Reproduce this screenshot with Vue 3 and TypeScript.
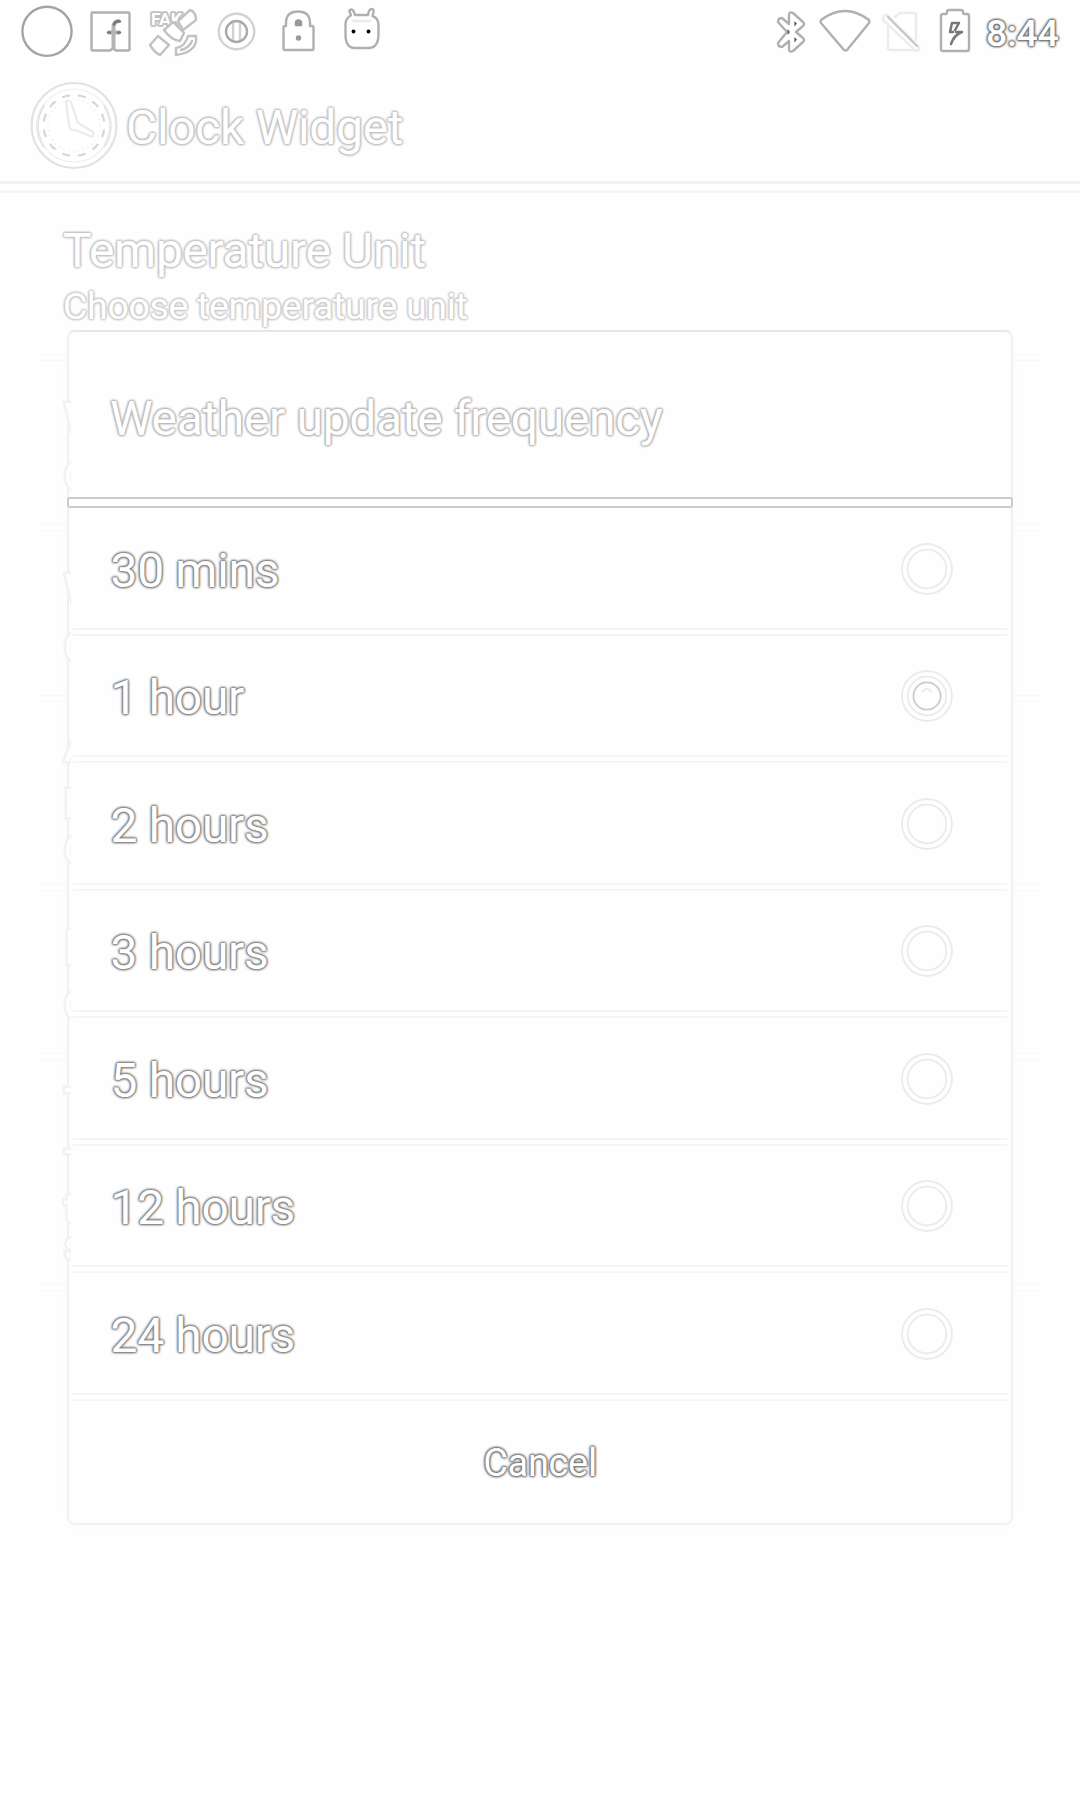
<script setup lang="ts">
const options: string[] = ['30 mins', '1 hour', '2 hours', '3 hours', '5 hours', '12 hours', '24 hours']
const selected = '1 hour'
const ticks: number[] = Array.from({ length: 12 }, (_, i) => i * 30 + 15)
// Section boundaries and leading glyphs of the settings list that peeks out behind the dialog
const sections: number[] = [170, 171, 189, 169, 231]
const peeks: { c: string; y: number; s: number }[] = [
  { c: 'W', y: 421, s: 48 }, { c: 'C', y: 474, s: 38 }, { c: 'W', y: 592, s: 48 }, { c: 'C', y: 645, s: 38 },
  { c: 'A', y: 745, s: 48 }, { c: 'E', y: 801, s: 38 }, { c: 'C', y: 848, s: 38 }, { c: 'E', y: 948, s: 48 },
  { c: 'C', y: 1003, s: 38 }, { c: 'T', y: 1106, s: 48 }, { c: 'T', y: 1162, s: 38 }, { c: 't', y: 1206, s: 38 },
  { c: 's', y: 1243, s: 38 },
]
</script>

<template>
  <main class="screen">
    <header class="status">
      <svg class="ic" width="69" height="66" viewBox="14 0 69 66"><circle cx="47" cy="31.300" r="24.600" /></svg>
      <svg class="ic mid" width="57" height="66" viewBox="83 0 57 66">
        <path d="M92 12.500h36q1.500 0 1.500 1.500v35q0 1.500-1.500 1.500h-12l-3-2-3 2H93q-1.500 0-1.500-1.500V14q0-1.500 1.500-1.500z" />
        <path class="eff" d="M113.500 49V27q0-6 6.500-6M108 32.500h12" />
        <path class="dark" d="M120 21.500q-5-1-6 3M108 32.500h2M118 32.500h2" />
      </svg>
      <svg class="ic soft" width="67" height="66" viewBox="140 0 67 66">
        <path d="M150 45l8-9 11 9-9 10q-5-2-10-10z" />
        <path d="M176 55v-7q9-1 12-12h8q2 16-20 19zM181 50q8-2 11-9" />
        <text x="151" y="25" class="fak" textLength="31" lengthAdjust="spacingAndGlyphs">FAK</text>
        <path d="M178 21l12-11q6 2 6 10l-13 10z" />
        <path d="M164 30l9-8 11 11-4 8q-9-1-16-11z" />
      </svg>
      <svg class="ic light" width="60" height="66" viewBox="207 0 60 66">
        <circle cx="236.500" cy="31.500" r="17.700" /><path d="M233 23v17M240 23v17" /><circle class="ring" cx="236.500" cy="31.500" r="10.500" />
      </svg>
      <svg class="ic mid" width="64" height="66" viewBox="267 0 64 66">
        <path d="M286 26v-3q0-11.500 12-11.500t12 11.500v3h2q1.500 0 1.500 1.500v21q0 1.500-1.500 1.500h-27q-1.500 0-1.500-1.500v-21q0-1.500 1.500-1.500z" />
        <path d="M295.500 25.500v-2.500q0-3 3-3t3 3v2.500z" class="fillg" /><circle class="fillg" cx="298.500" cy="38" r="2" />
      </svg>
      <svg class="ic mid" width="62" height="66" viewBox="332 0 62 66">
        <path d="M352 15.500l-1.500-4q0-2 2-2t3.500 5.500h13q1-6 3.500-6t2 3l-1 4q6 2 6 9v9q0 14-10 14h-14q-9 0-9-14v-9q0-7 5.500-9.500z" />
        <path class="faint" d="M354 21h17" />
        <circle class="eye" cx="354.500" cy="31.500" r="1.900" /><circle class="eye" cx="369.500" cy="31.500" r="1.900" />
      </svg>
      <span class="grow"></span>
      <svg class="ic mid" width="46" height="66" viewBox="770 0 46 66">
        <path d="M789 15q0-4 4-2l10 9q2 2 0 4l-7 6 7 6q2 2 0 4l-10 9q-4 2-4-2v-8l-7 6q-4 0-4-4l9-11-9-10q0-4 4-4l7 6z" />
        <path class="fillk" d="M795 22l1.500 1.500-1.500 2zM795 38l1.500 1.500-1.500 2zM788 30l1.500 2-1.500 2z" />
      </svg>
      <svg class="ic mid" width="62" height="66" viewBox="816 0 62 66"><path d="M821 20q24-18 48 0 1 1 0 3l-22 27q-1.500 1-3 0l-23-27q-1-2 0-3z" /></svg>
      <svg class="ic faint" width="54" height="66" viewBox="878 0 54 66">
        <path d="M895 17l5-4h14q2 0 2 2v25M888 24v24q0 2 2 2h25M884 16q2-2 4 0l31 31q1 4-3 4l-33-31q0-2 1-4z" /><path class="diag" d="M888 17l29 29" />
      </svg>
      <svg class="ic mid" width="52" height="66" viewBox="932 0 52 66">
        <path d="M943 14h3q1 0 1-2 0-2 2-2h12q2 0 2 2t1 2h3q2 0 2 2v33q0 2-2 2h-24q-2 0-2-2V16q0-2 2-2z" />
        <path class="dark" d="M952 23h7l-4 7M952 23l-2 9h3M962 32q-8 3-11 12M956 32h5" />
      </svg>
      <span class="time edge">8:44</span>
    </header>

    <div class="appbar">
      <svg width="92" height="92" viewBox="28 79 92 92" class="clock">
        <circle cx="74" cy="125.500" r="42.500" /><path class="c2" d="M44 105q-13 21 0 42M104 105q13 21 0 42" />
        <circle cx="74" cy="125.500" r="36.500" class="c5" />
        <circle cx="74" cy="125.500" r="26" class="c3" />
        <path v-for="t in ticks" :key="t" d="M70 95.500q4-1 8 0" :transform="`rotate(${t} 74 125.5)`" class="c4" />
        <path class="hand" d="M66 102q2-3 5 0l7 21 15 9q2 2-1 5l-17-7q-5 1-6-5z" />
      </svg>
      <h1 class="edge">Clock Widget</h1>
    </div>
    <div class="bar"></div>

    <section class="prefs">
      <h2 class="edge">Temperature Unit</h2>
      <p class="edge">Choose temperature unit</p>
      <div class="lines">
        <div v-for="(h, i) in sections" :key="i" class="section" :style="{ height: h + 'px' }"></div>
        <div class="section"></div>
      </div>
    </section>

    <section class="dialog">
      <h3 class="edge">Weather update frequency</h3>
      <div class="accent"></div>
      <template v-for="o in options" :key="o">
        <div class="row">
          <span class="edge">{{ o }}</span>
          <svg width="54" height="54" viewBox="-27 -27 54 54" class="radio">
            <circle r="25" /><circle r="19.300" />
            <template v-if="o === selected"><circle r="13.600" class="on" /><path d="M-5-4q5-6 10 0" /></template>
          </svg>
        </div>
        <div class="sep"></div>
      </template>
      <button class="edge">Cancel</button>
    </section>

    <svg class="peek" width="9" height="1000" viewBox="62 330 9 1000">
      <text v-for="p in peeks" :key="p.y" x="64" :y="p.y + 16" :font-size="p.s">{{ p.c }}</text>
    </svg>
  </main>
</template>

<style>
body { margin: 0; background: #fefefe; }
</style>
<style scoped>
.screen { position: relative; width: 1080px; height: 1794px; overflow: hidden; background: #fefefe; font-family: Roboto, "Noto Sans", sans-serif; }
.edge { color: #fff; -webkit-text-stroke: 4.200px #fff; paint-order: stroke fill; stroke-linejoin: round; font-weight: 400; letter-spacing: -0.330px; white-space: nowrap; text-shadow: 0 0 2px var(--g), 0 0 2px var(--g), 0 0 3px var(--g), 0 0 3px var(--g), 0 0 3px var(--g); }
.status { display: flex; height: 66px; padding-left: 14px; }
.ic { flex: none; fill: #fff; stroke: #a4a4a4; stroke-width: 2.400; stroke-linejoin: round; stroke-linecap: round; }
.mid { stroke: #b0b0b0; }
.soft { stroke: #c2c2c2; }
.light { stroke: #d2d2d2; }
.ic .ring { stroke: #aaa; fill: none; }
.ic .eff { stroke: #b4b4b4; fill: none; stroke-width: 4; stroke-linecap: butt; }
.ic .dark { stroke: #777; fill: none; stroke-width: 2.500; }
.faint { stroke: #ececec; }
.diag { stroke: #c8c8c8; }
.ic .fillg { fill: #999; stroke: #999; stroke-width: 1.500; }
.ic .fillk { fill: #444; stroke: #777; stroke-width: 1; }
.ic .eye { fill: #000; stroke: none; }
.fak { font: 700 16px Roboto, sans-serif; fill: #fff; stroke: #c0c0c0; stroke-width: 3.500; paint-order: stroke; }
.grow { flex: 1; }
.time { --g: #6c6c6c; width: 96px; padding-left: 2px; box-sizing: border-box; font-size: 37.500px; line-height: 66px; }
.time.edge { font-weight: 500; -webkit-text-stroke-width: 3.600px; }
.appbar { display: flex; align-items: center; height: 115px; padding-left: 28px; box-sizing: border-box; }
.clock { flex: none; margin-top: 3px; fill: #fff; stroke: #e2e2e2; stroke-width: 2.200; }
.c2 { stroke: #d8d8d8; } .c5 { stroke: #eee; stroke-width: 1.200; fill: none; } .c3 { stroke: #f5f5f5; stroke-dasharray: 2 3; }
.c4 { stroke: #d6d6d6; fill: none; } .hand { stroke: #ebebeb; }
h1 { --g: #bbb; margin: 9px 0 0 6px; font-size: 48px; line-height: 60px; }
.bar { height: 6px; border-top: 3px solid #f1f1f1; border-bottom: 3px solid #f6f6f6; background: #fff; }
.prefs { padding: 30px 40px 0; }
h2 { --g: #bfbfbf; margin: 0 0 0 23px; font-size: 48px; line-height: 56px; }
p { --g: #c6c6c6; margin: 0 0 0 23px; font-size: 37.500px; line-height: 54px; }
.lines { margin-top: 21px; }
.section { box-sizing: border-box; border-top: 1px solid #f8f8f8; }
.section::before { content: ""; display: block; height: 5px; border-bottom: 1px solid #f9f9f9; }
.dialog { position: absolute; left: 67px; top: 330px; width: 946px; height: 1195px; box-sizing: border-box; border: 2px solid #f1f1f1; border-top-color: #e7e7e7; border-radius: 8px; background: #fefefe; box-shadow: 0 4px 18px rgba(0, 0, 0, 0.012); }
h3 { --g: #b2b2b2; margin: 0; padding: 4px 0 0 41px; height: 165px; box-sizing: border-box; line-height: 166px; font-size: 48px; }
.accent { height: 7px; margin: 0 -2px; border: 2px solid #cbcbcb; border-radius: 3px; background: #fff; }
.row { display: flex; align-items: center; justify-content: space-between; height: 119.500px; padding: 2px 57px 0 41.500px; box-sizing: border-box; }
.row span { --g: #7c7c7c; font-size: 48px; line-height: 60px; margin-top: 4px; }
.radio { fill: none; stroke: #ebebeb; stroke-width: 1.800; }
.radio .on { stroke: #ccc; }
.sep { height: 4px; margin: 0 4px; border-top: 2px solid #f5f5f5; border-bottom: 2px solid #f5f5f5; background: #fff; }
button { --g: #707070; display: block; width: 100%; height: 124px; padding: 1px 0 0; border: 0; background: none; font: 400 38px Roboto, sans-serif; }
.peek { position: absolute; left: 62px; top: 330px; fill: #fff; stroke: #f2f2f2; stroke-width: 5; paint-order: stroke; }
</style>
